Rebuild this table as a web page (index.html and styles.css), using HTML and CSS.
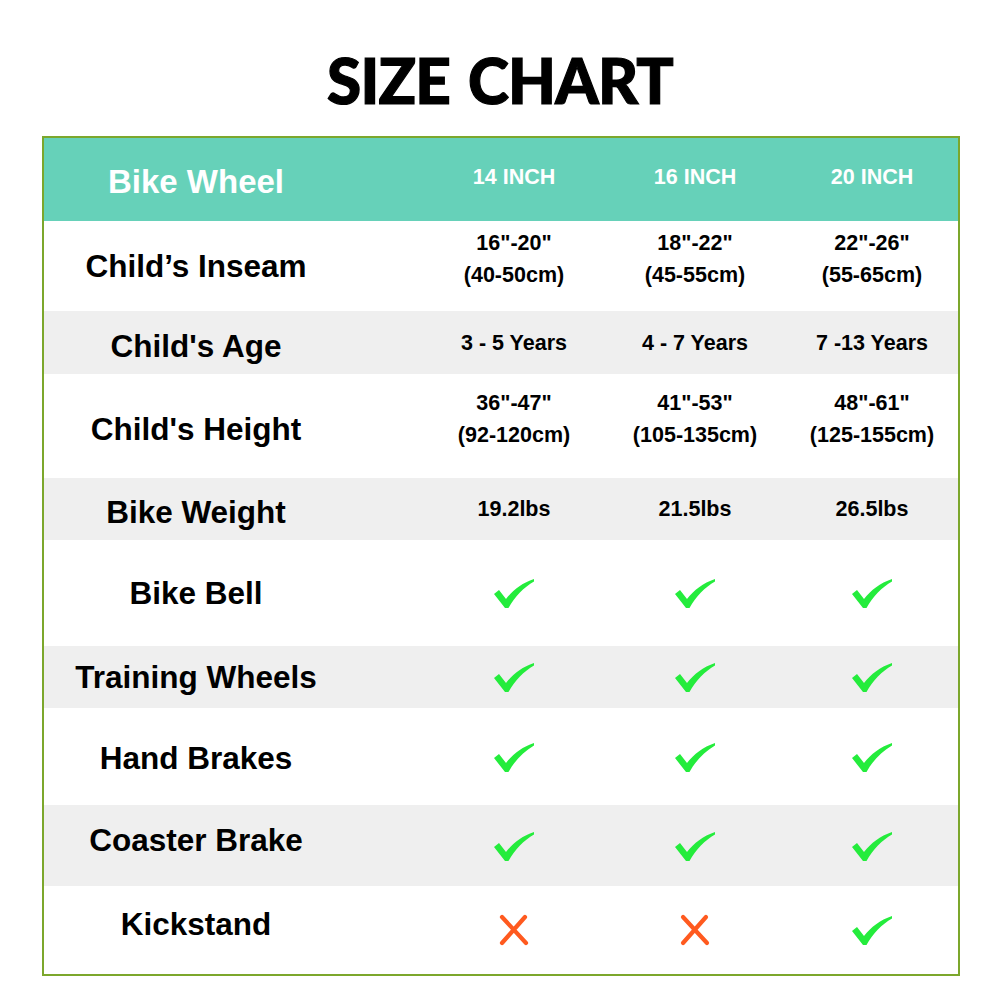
FILE: index.html
```html
<!DOCTYPE html>
<html>
<head>
<meta charset="utf-8">
<link rel="stylesheet" href="styles.css">
</head>
<body>
<svg width="0" height="0" class="defs">
  <defs>
    <symbol id="chk" viewBox="0 0 40 30">
      <path d="M0 16 L5 12 L12 21 C19 12 28 5 40 1 L40 3.5 C30 9.5 21 18 14.5 30 L11 30 Z" fill="#24ec3c"/>
    </symbol>
    <symbol id="crs" viewBox="0 0 30 32">
      <path d="M3 3 L27 29 M26 3 L3 29" stroke="#ff5a1f" stroke-width="4.2" stroke-linecap="round" fill="none"/>
    </symbol>
  </defs>
</svg>
<h1 class="title">SIZE CHART</h1>
<div class="chart">
  <div class="row head">
    <div class="label">Bike Wheel</div>
    <div class="cell">14 INCH</div>
    <div class="cell">16 INCH</div>
    <div class="cell">20 INCH</div>
  </div>
  <div class="row r-inseam">
    <div class="label">Child’s Inseam</div>
    <div class="cell two">16"-20"<br>(40-50cm)</div>
    <div class="cell two">18"-22"<br>(45-55cm)</div>
    <div class="cell two">22"-26"<br>(55-65cm)</div>
  </div>
  <div class="row gray r-age">
    <div class="label">Child's Age</div>
    <div class="cell">3 - 5 Years</div>
    <div class="cell">4 - 7 Years</div>
    <div class="cell">7 -13 Years</div>
  </div>
  <div class="row r-height">
    <div class="label">Child's Height</div>
    <div class="cell two">36"-47"<br>(92-120cm)</div>
    <div class="cell two">41"-53"<br>(105-135cm)</div>
    <div class="cell two">48"-61"<br>(125-155cm)</div>
  </div>
  <div class="row gray r-weight">
    <div class="label">Bike Weight</div>
    <div class="cell">19.2lbs</div>
    <div class="cell">21.5lbs</div>
    <div class="cell">26.5lbs</div>
  </div>
  <div class="row r-bell">
    <div class="label">Bike Bell</div>
    <div class="cell"><svg class="check"><use href="#chk"/></svg></div>
    <div class="cell"><svg class="check"><use href="#chk"/></svg></div>
    <div class="cell"><svg class="check"><use href="#chk"/></svg></div>
  </div>
  <div class="row gray r-training">
    <div class="label">Training Wheels</div>
    <div class="cell"><svg class="check"><use href="#chk"/></svg></div>
    <div class="cell"><svg class="check"><use href="#chk"/></svg></div>
    <div class="cell"><svg class="check"><use href="#chk"/></svg></div>
  </div>
  <div class="row r-hand">
    <div class="label">Hand Brakes</div>
    <div class="cell"><svg class="check"><use href="#chk"/></svg></div>
    <div class="cell"><svg class="check"><use href="#chk"/></svg></div>
    <div class="cell"><svg class="check"><use href="#chk"/></svg></div>
  </div>
  <div class="row gray r-coaster">
    <div class="label">Coaster Brake</div>
    <div class="cell"><svg class="check"><use href="#chk"/></svg></div>
    <div class="cell"><svg class="check"><use href="#chk"/></svg></div>
    <div class="cell"><svg class="check"><use href="#chk"/></svg></div>
  </div>
  <div class="row r-kick">
    <div class="label">Kickstand</div>
    <div class="cell"><svg class="cross"><use href="#crs"/></svg></div>
    <div class="cell"><svg class="cross"><use href="#crs"/></svg></div>
    <div class="cell"><svg class="check"><use href="#chk"/></svg></div>
  </div>
</div>
</body>
</html>
```
FILE: styles.css
```css
html, body {
  margin: 0;
  padding: 0;
  background: #ffffff;
}
body {
  width: 1000px;
  height: 1000px;
  font-family: "Liberation Sans", Arial, sans-serif;
  color: #000;
}
.defs {
  position: absolute;
  width: 0;
  height: 0;
}
.title {
  margin: 0;
  height: 136px;
  box-sizing: border-box;
  padding-top: 44px;
  text-align: center;
  font-family: "Lato", "Liberation Sans", sans-serif;
  font-weight: 900;
  font-size: 62px;
  line-height: 72px;
  letter-spacing: -0.8px;
  word-spacing: 4px;
  -webkit-text-stroke: 1.2px #000;
}
.chart {
  margin-left: 42px;
  width: 918px;
  border: 2px solid #7ca72c;
  box-sizing: border-box;
}
.row {
  display: grid;
  grid-template-columns: 380px 180px 182px 1fr;
  align-items: center;
}
.row.gray {
  background: #efefef;
}
.label {
  padding-right: 76px;
  text-align: center;
  font-weight: 700;
  font-size: 31.5px;
}
.cell {
  text-align: center;
  font-weight: 700;
  font-size: 21.5px;
  line-height: 32px;
  display: flex;
  justify-content: center;
  align-items: center;
}
.cell.two {
  padding-bottom: 14px;
}
.head {
  background: #66d1b9;
  color: #fff;
  height: 83px;
}
.head .label {
  font-size: 33px;
  padding-top: 4px;
}
.head .cell {
  padding-bottom: 6px;
}
.r-inseam { height: 90px; }
.r-age { height: 63px; }
.r-age .label { padding-top: 8px; }
.r-height { height: 104px; }
.r-height .label { padding-top: 6px; }
.r-weight { height: 62px; }
.r-weight .label { padding-top: 6px; }
.r-bell { height: 106px; }
.r-training { height: 62px; }
.r-hand { height: 97px; }
.r-hand .label { padding-top: 4px; }
.r-coaster { height: 81px; }
.r-coaster .label { padding-bottom: 10px; }
.r-kick { height: 88px; }
.r-kick .label { padding-bottom: 12px; }
.check {
  width: 40px;
  height: 30px;
}
.cross {
  width: 30px;
  height: 32px;
}
```
